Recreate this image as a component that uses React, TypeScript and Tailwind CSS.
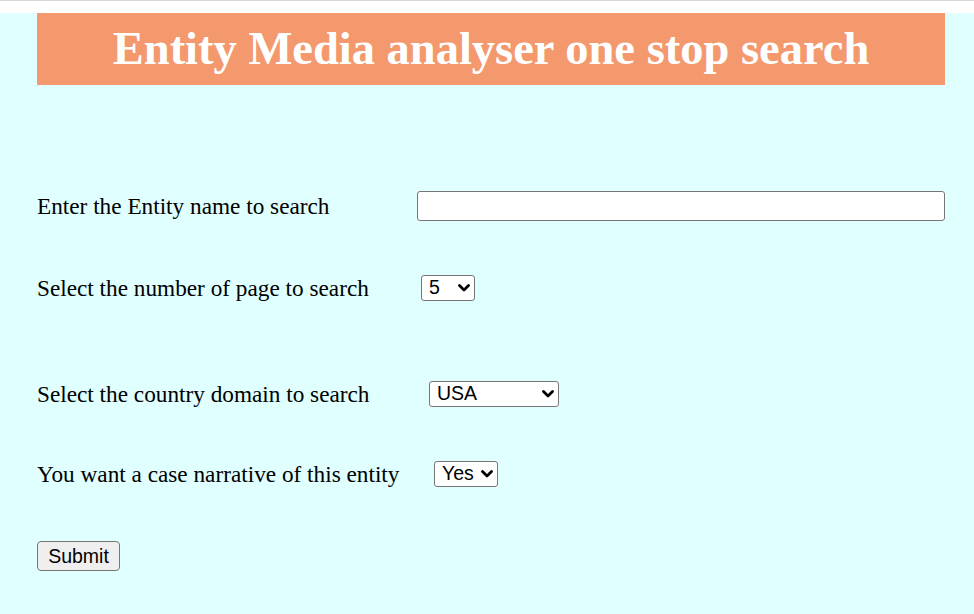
import React from "react";

function Chevron() {
  return (
    <svg
      className="pointer-events-none absolute right-[5px] top-1/2 -translate-y-1/2"
      width="12"
      height="8"
      viewBox="0 0 12 8"
      fill="none"
    >
      <path d="M1.5 1.5 L6 6 L10.5 1.5" stroke="#000" strokeWidth="2.8" strokeLinecap="round" strokeLinejoin="round" />
    </svg>
  );
}

function Select({ options, widthClass, mlClass }: { options: string[]; widthClass: string; mlClass: string }) {
  return (
    <div className={`relative inline-flex h-[26px] ${widthClass} ${mlClass}`}>
      <select className="h-full w-full appearance-none rounded-[3px] border border-[#767676] bg-white pl-[7px] pr-[18px] text-[19.5px] leading-none text-black outline-none [font-family:'Liberation_Sans',Arial,sans-serif]">
        {options.map((o) => (
          <option key={o}>{o}</option>
        ))}
      </select>
      <Chevron />
    </div>
  );
}

export default function App() {
  const label = "w-[380px] shrink-0 text-[23.25px] text-black [font-family:'Liberation_Serif','Times_New_Roman',serif]";
  return (
    <div className="min-h-screen w-full bg-[#e0ffff]">
      <div className="h-px bg-[#d4d6d8]" />
      <div className="h-[12px] bg-white" />
      <div className="pl-[37px] pr-[29px]">
        <div className="flex h-[72px] items-center justify-center bg-[#f4986d]">
          <h1 className="text-[46.5px] font-bold text-white [font-family:'Liberation_Serif','Times_New_Roman',serif]">
            Entity Media analyser one stop search
          </h1>
        </div>

        <div className="mt-[106px] flex h-[30px] items-center">
          <div className={label}>Enter the Entity name to search</div>
          <input
            type="text"
            className="h-[30px] w-[529px] rounded-[3px] border border-[#767676] bg-white outline-none"
          />
        </div>

        <div className="mt-[54px] flex h-[26px] items-center">
          <div className={label}>Select the number of page to search</div>
          <Select options={["5", "10", "15", "20"]} widthClass="w-[54px]" mlClass="ml-[4px]" />
        </div>

        <div className="mt-[80px] flex h-[26px] items-center">
          <div className={label}>Select the country domain to search</div>
          <Select options={["USA", "UK", "India"]} widthClass="w-[130px]" mlClass="ml-[12px]" />
        </div>

        <div className="mt-[54px] flex h-[26px] items-center">
          <div className={label}>You want a case narrative of this entity</div>
          <Select options={["Yes", "No"]} widthClass="w-[64px]" mlClass="ml-[17px]" />
        </div>

        <div className="mt-[54px]">
          <button className="h-[30px] w-[83px] rounded-[4px] border border-[#767676] bg-[#efefef] text-[19.5px] text-black [font-family:'Liberation_Sans',Arial,sans-serif]">
            Submit
          </button>
        </div>
      </div>
    </div>
  );
}
